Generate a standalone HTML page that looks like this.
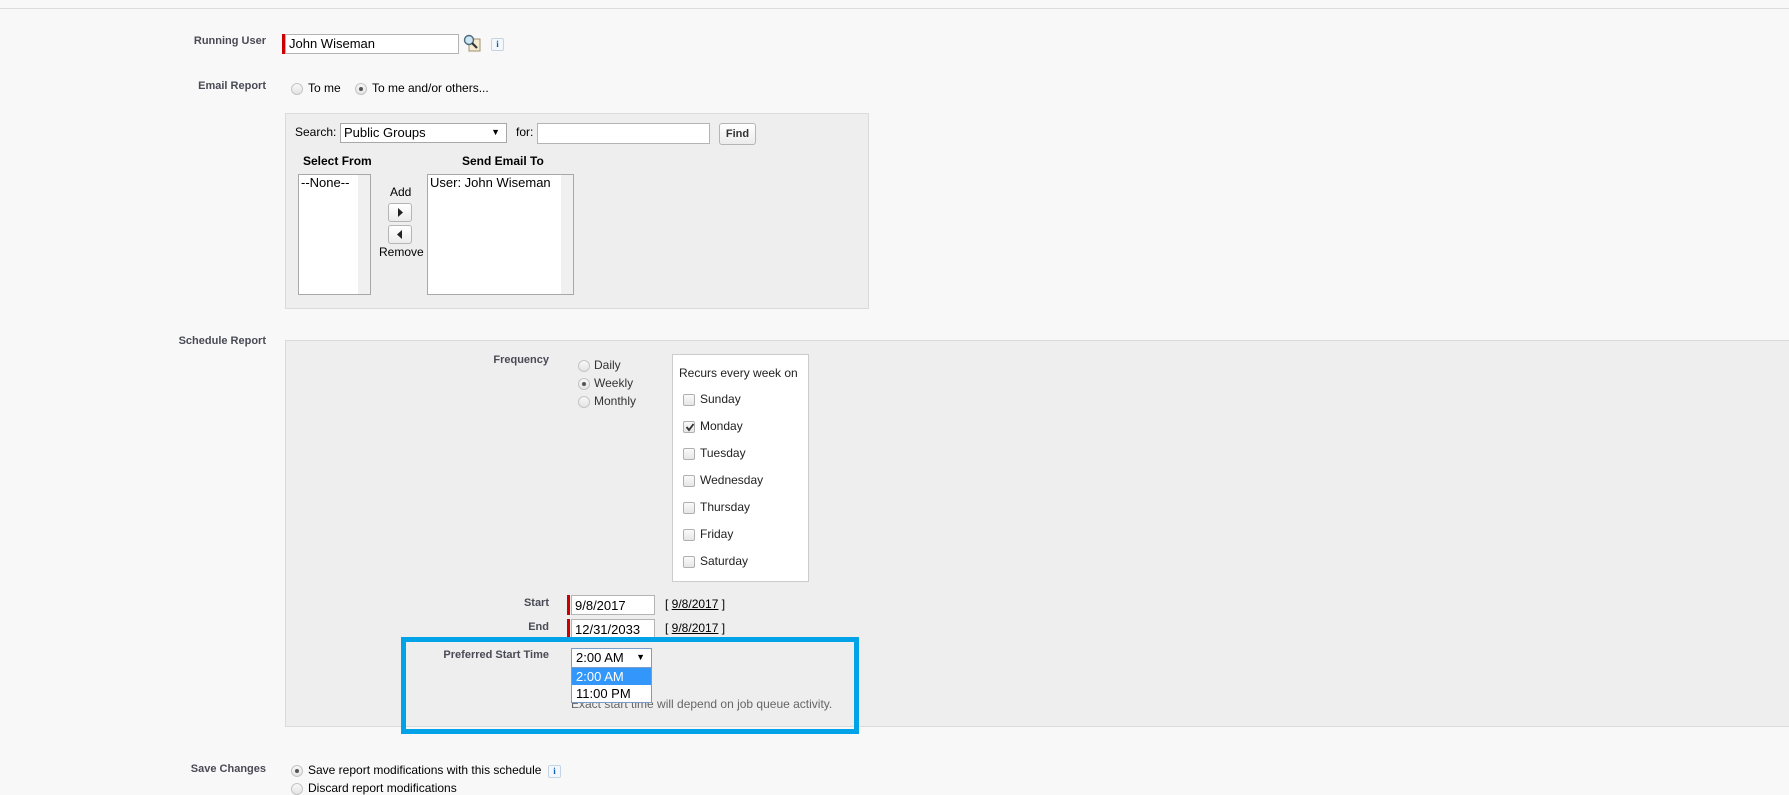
<!DOCTYPE html>
<html><head><meta charset="utf-8"><style>
*{box-sizing:border-box}
body{margin:0;width:1789px;height:793px;background:#f8f8f8;font-family:"Liberation Sans",Arial,sans-serif;font-size:13px;color:#000;position:relative;overflow:hidden}
.a{position:absolute;white-space:nowrap}
.lbl{font-size:11px;font-weight:bold;color:#4a4a56;text-align:right}
.inp{position:absolute;background:#fff;border:1px solid #b4b4b4;font-size:13px;padding:1px 3px;line-height:15px}
.req{position:absolute;background:#c00;width:3px}
.radio{position:absolute;width:12px;height:12px;border-radius:50%;border:1px solid #c4c4c4;background:linear-gradient(#f8f8f8,#e4e4e4)}
.radio.on::after{content:"";position:absolute;left:3px;top:3px;width:4px;height:4px;border-radius:50%;background:#555}
.cb{position:absolute;width:12px;height:12px;border:1px solid #b0b0b0;border-radius:2px;background:linear-gradient(#fafafa,#e6e6e6)}
.btn{position:absolute;border:1px solid #b5b5b5;border-radius:3px;background:linear-gradient(#fff,#ececec);font-size:11px;font-weight:bold;color:#333;text-align:center}
.info{position:absolute;width:13px;height:13px;border:1px solid #c4d4e4;border-radius:2px;background:#f4f8fc;color:#1060b0;font:bold 9px "Liberation Serif",serif;text-align:center;line-height:11px}
.sb{position:absolute;right:0;top:0;bottom:0;width:12px;background:#f0f0f0}
</style></head><body>
<div class="a" style="left:0;top:8px;width:1789px;height:1px;background:#dcdcdc"></div>

<div class="a lbl" style="left:150px;width:116px;top:35px">Running User</div>
<div class="req" style="left:282px;top:34px;height:20px"></div>
<div class="inp" style="left:285px;top:34px;width:174px;height:20px">John Wiseman</div>
<svg class="a" style="left:463px;top:34px" width="18" height="18" viewBox="0 0 18 18"><rect x="6" y="5" width="11" height="12" fill="#f3ead0" stroke="#a09070"/><circle cx="6" cy="6" r="4.5" fill="#cfe6f5" stroke="#4a6a80" stroke-width="1.4"/><path d="M9 9l5 5" stroke="#333" stroke-width="2.2"/></svg>
<div class="info" style="left:491px;top:38px">i</div>

<div class="a lbl" style="left:150px;width:116px;top:80px">Email Report</div>
<div class="radio" style="left:291px;top:83px"></div><div class="a" style="left:308px;top:81px;font-size:12px">To me</div>
<div class="radio on" style="left:355px;top:83px"></div><div class="a" style="left:372px;top:81px;font-size:12px">To me and/or others...</div>

<div class="a" style="left:285px;top:113px;width:584px;height:196px;background:#eee;border:1px solid #dadada"></div>
<div class="a" style="left:295px;top:125px;font-size:12px">Search:</div>
<div class="inp" style="left:340px;top:123px;width:167px;height:20px;border-color:#a8a8a8">Public Groups<span style="position:absolute;right:6px;font-size:9px">&#9660;</span></div>
<div class="a" style="left:516px;top:125px;font-size:12px">for:</div>
<div class="inp" style="left:537px;top:123px;width:173px;height:21px"></div>
<div class="btn" style="left:719px;top:123px;width:37px;height:22px;line-height:20px">Find</div>
<div class="a" style="left:303px;top:154px;font-size:12px;font-weight:bold">Select From</div>
<div class="a" style="left:462px;top:154px;font-size:12px;font-weight:bold">Send Email To</div>
<div class="inp" style="left:298px;top:174px;width:73px;height:121px;border-color:#a8a8a8;padding:0 2px">--None--<div class="sb"></div></div>
<div class="inp" style="left:427px;top:174px;width:147px;height:121px;border-color:#a8a8a8;padding:0 2px">User: John Wiseman<div class="sb"></div></div>
<div class="a" style="left:390px;top:185px;font-size:12px">Add</div>
<div class="btn" style="left:388px;top:203px;width:24px;height:19px"><svg width="22" height="17"><path d="M9 4l5 4.5-5 4.5z" fill="#222"/></svg></div>
<div class="btn" style="left:388px;top:225px;width:24px;height:19px"><svg width="22" height="17"><path d="M13 4l-5 4.5 5 4.5z" fill="#222"/></svg></div>
<div class="a" style="left:379px;top:245px;font-size:12px">Remove</div>

<div class="a lbl" style="left:150px;width:116px;top:335px">Schedule Report</div>
<div class="a" style="left:285px;top:340px;width:1510px;height:387px;background:#eee;border:1px solid #dadada"></div>
<div class="a lbl" style="left:430px;width:119px;top:354px">Frequency</div>
<div class="radio" style="left:578px;top:360px"></div><div class="a" style="left:594px;top:358px;font-size:12px;color:#333">Daily</div>
<div class="radio on" style="left:578px;top:378px"></div><div class="a" style="left:594px;top:376px;font-size:12px;color:#333">Weekly</div>
<div class="radio" style="left:578px;top:396px"></div><div class="a" style="left:594px;top:394px;font-size:12px;color:#333">Monthly</div>

<div class="a" style="left:672px;top:354px;width:137px;height:228px;background:#fff;border:1px solid #ccc"></div>
<div class="a" style="left:679px;top:366px;font-size:12px;color:#222">Recurs every week on</div>
<div class="cb" style="left:683px;top:394px"></div><div class="a" style="left:700px;top:392px;font-size:12px;color:#222">Sunday</div>
<div class="cb" style="left:683px;top:421px"></div><svg class="a" style="left:684px;top:421px" width="12" height="12"><path d="M2.5 6l2.5 3 4.5-6" stroke="#333" stroke-width="1.8" fill="none"/></svg><div class="a" style="left:700px;top:419px;font-size:12px;color:#222">Monday</div>
<div class="cb" style="left:683px;top:448px"></div><div class="a" style="left:700px;top:446px;font-size:12px;color:#222">Tuesday</div>
<div class="cb" style="left:683px;top:475px"></div><div class="a" style="left:700px;top:473px;font-size:12px;color:#222">Wednesday</div>
<div class="cb" style="left:683px;top:502px"></div><div class="a" style="left:700px;top:500px;font-size:12px;color:#222">Thursday</div>
<div class="cb" style="left:683px;top:529px"></div><div class="a" style="left:700px;top:527px;font-size:12px;color:#222">Friday</div>
<div class="cb" style="left:683px;top:556px"></div><div class="a" style="left:700px;top:554px;font-size:12px;color:#222">Saturday</div>

<div class="a lbl" style="left:430px;width:119px;top:597px">Start</div>
<div class="req" style="left:567px;top:595px;height:20px"></div>
<div class="inp" style="left:571px;top:595px;width:84px;height:20px;padding-top:2px">9/8/2017</div>
<div class="a" style="left:665px;top:597px;font-size:12px">[ <u>9/8/2017</u> ]</div>
<div class="a lbl" style="left:430px;width:119px;top:621px">End</div>
<div class="req" style="left:567px;top:619px;height:20px"></div>
<div class="inp" style="left:571px;top:619px;width:84px;height:20px;padding-top:2px">12/31/2033</div>
<div class="a" style="left:665px;top:621px;font-size:12px">[ <u>9/8/2017</u> ]</div>

<div class="a lbl" style="left:400px;width:149px;top:649px">Preferred Start Time</div>
<div class="a" style="left:571px;top:697px;font-size:12px;color:#666">Exact start time will depend on job queue activity.</div>
<div class="inp" style="left:571px;top:648px;width:81px;height:20px;border-color:#7a9cc8;padding-left:4px">2:00 AM<span style="position:absolute;right:6px;font-size:9px">&#9660;</span></div>
<div class="a" style="left:571px;top:667px;width:81px;height:36px;background:#fff;border:1px solid #7a9cc8"></div>
<div class="a" style="left:572px;top:668px;width:79px;height:17px;background:#3296fa;color:#fff;padding-left:4px;line-height:17px">2:00 AM</div>
<div class="a" style="left:572px;top:685px;padding-left:4px;line-height:17px">11:00 PM</div>
<div class="a" style="left:401px;top:637px;width:458px;height:97px;border:5px solid #00a2e8"></div>

<div class="a lbl" style="left:150px;width:116px;top:763px">Save Changes</div>
<div class="radio on" style="left:291px;top:765px"></div><div class="a" style="left:308px;top:763px;font-size:12px">Save report modifications with this schedule</div>
<div class="info" style="left:548px;top:765px">i</div>
<div class="radio" style="left:291px;top:783px"></div><div class="a" style="left:308px;top:781px;font-size:12px">Discard report modifications</div>
</body></html>
